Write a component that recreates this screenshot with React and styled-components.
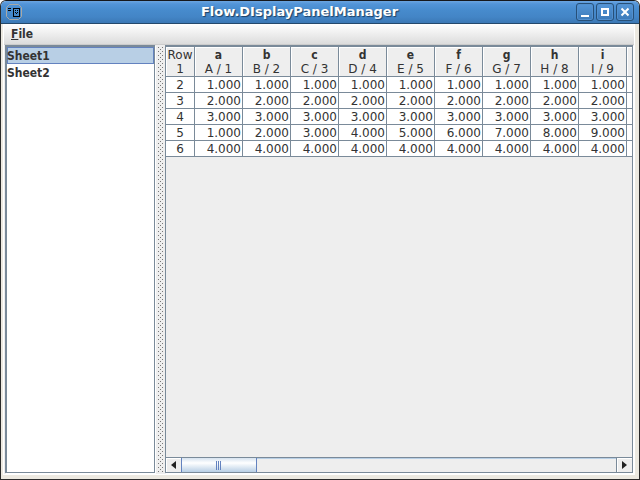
import React, { useState } from "react";
import styled, { createGlobalStyle } from "styled-components";

const line = "#7a8a99";

const Global = createGlobalStyle`
  * { box-sizing: border-box; }
  body { margin: 0; background: #fff; }
  button { font: inherit; padding: 0; }
  svg { flex: none; }
`;

const Frame = styled.main`
  display: flex;
  flex-direction: column;
  height: 100vh;
  overflow: hidden;
  border: 1px solid #2b2b2b;
  border-top-color: #16181c;
  border-radius: 6px 6px 0 0;
  background: #ece9e1;
  color: #333;
  font: 12px "DejaVu Sans", sans-serif;
`;

const TitleBar = styled.header`
  display: flex;
  flex: none;
  align-items: center;
  height: 23px;
  padding: 0 5px 0 4px;
  border-bottom: 1px solid #24486b;
  background: linear-gradient(#6ba5e0 0, #5294d8 3px, #478bcd 9px, #4385c6 16px, #3b78b5);
`;

const Title = styled.h1`
  flex: 1;
  margin: 0;
  color: #fff;
  font: bold 13px/22px "DejaVu Sans", sans-serif;
  text-align: center;
  text-shadow: 1px 1px 1px #1c3f63;
`;

const WindowButtons = styled.div`
  display: flex;
  gap: 2px;
`;

const WindowButton = styled.button`
  display: flex;
  width: 18px;
  height: 18px;
  border: 1px solid #275078;
  border-radius: 3px;
  background: linear-gradient(#5496d8, #3c7ab8);
  box-shadow: inset 0 0 0 1px #5290cf;
`;

const Content = styled.div`
  display: flex;
  flex: 1;
  flex-direction: column;
  min-height: 0;
  margin: 0 4px 4px 2px;
  padding-bottom: 1px;
  border: solid #fff;
  border-width: 0 1px 1px;
  background: #eee;
`;

const MenuBar = styled.nav`
  flex: none;
  height: 21px;
  padding-left: 7px;
  border-bottom: 1px solid #ccc;
  background: linear-gradient(#fff, #dcdcdc);
`;

const MenuButton = styled.button`
  border: 0;
  background: none;
  color: #333;
  font: bold 12px/20px "DejaVu Sans Condensed", "DejaVu Sans", sans-serif;
  font-stretch: condensed;
`;

const Split = styled.div`
  display: grid;
  flex: 1;
  grid-template-columns: 150px 10px minmax(0, 1fr);
  min-height: 0;
  margin: 0 1px;
`;

const SheetList = styled.div`
  border: 1px solid ${line};
  border-width: 2px 1px 1px 2px;
  background: #fff;
  box-shadow: 1px 1px #fff;
`;

const SheetButton = styled.button`
  display: block;
  width: 100%;
  height: 17px;
  border: 0;
  background: ${(p) => (p.$selected ? "#b8cfe5" : "transparent")};
  box-shadow: ${(p) => (p.$selected ? "inset 0 0 0 1px #6382bf" : "none")};
  color: #333;
  font: bold 12px/18px "DejaVu Sans Condensed", "DejaVu Sans", sans-serif;
  font-stretch: condensed;
  text-align: left;
`;

const Divider = styled.div`
  margin: 2px 2px 1px 3px;
  background:
    conic-gradient(from 270deg at 1px 1px, #777 90deg, transparent 0) 0 0 / 4px 4px,
    conic-gradient(from 270deg at 1px 1px, #777 90deg, transparent 0) 2px 2px / 4px 4px;
`;

const TablePanel = styled.section`
  display: flex;
  flex-direction: column;
  min-width: 0;
  border: solid ${line};
  border-width: 2px 1px 1px 1px;
  box-shadow: 1px 1px #fff;
`;

const TableView = styled.div`
  flex: 1;
  min-height: 0;
  overflow: hidden;
`;

const Table = styled.table`
  width: 100%;
  border-collapse: separate;
  border-spacing: 0;
  table-layout: fixed;
  background: #fff;
`;

const RowCol = styled.col`
  width: 29px;
`;

const DataCol = styled.col`
  width: 48px;
`;

const Heading = styled.th`
  height: 30px;
  padding: 1px 0 0;
  border: solid ${line};
  border-width: 0 1px 1px 0;
  background: #eee;
  box-shadow: inset 1px 1px #fff;
  font-weight: normal;
  line-height: 14px;
`;

const HeadingRest = styled.td`
  border-bottom: 1px solid ${line};
  background: #eee;
  box-shadow: inset 1px 1px #fff;
`;

const CellRest = styled.td`
  border-bottom: 1px solid ${line};
`;

const ColumnName = styled.b`
  display: block;
  font-family: "DejaVu Sans Condensed", "DejaVu Sans", sans-serif;
  font-stretch: condensed;
`;

const Cell = styled.td`
  height: 16px;
  padding: ${(p) => (p.$center ? "2px 0 0" : "2px 1px 0 0")};
  border: solid ${line};
  border-width: 0 1px 1px 0;
  line-height: 13px;
  text-align: ${(p) => (p.$center ? "center" : "right")};
`;

const ScrollBar = styled.div`
  display: flex;
  flex: none;
  height: 15px;
  border-top: 1px solid ${line};
  background: #eee;
`;

const Arrow = styled.button`
  display: flex;
  align-items: center;
  justify-content: center;
  width: 15px;
  border: 0;
  background: #eee;
  box-shadow: inset 1px 1px #fff;
`;

const Track = styled.div`
  flex: 1;
  border-right: 1px solid ${line};
  box-shadow: inset 0 1px #b8cfe5;
`;

const Thumb = styled.div`
  display: flex;
  align-items: center;
  justify-content: center;
  width: 76px;
  height: 100%;
  border: solid #6382bf;
  border-width: 0 1px;
  background: linear-gradient(#d6e3f0 0, #fff 5px, #b8cfe5);
`;

const columns = ["a", "b", "c", "d", "e", "f", "g", "h", "i"];
const rows = [
  [2, () => 1],
  [3, () => 2],
  [4, () => 3],
  [5, (i) => i + 1],
  [6, () => 4],
];

function AppIcon() {
  return (
    <svg width="18" height="18" viewBox="0 0 18 18" fill="none">
      <path d="M4.500 1.500h9l3 3v9l-3 3h-9l-3-3v-9z" stroke="#a9a9a5" />
      <g shapeRendering="crispEdges">
        <path d="M3 5.500h3M3 7.500h3" stroke="#000" />
        <path d="M8.500 5.500h6v8h-6z" stroke="#000" />
        <path d="M10 7h1v1h-1zM12 7h1v1h-1zM10 9h1v1h-1zM12 9h1v1h-1zM11 10h1v1h-1z" fill="#000" />
      </g>
    </svg>
  );
}

function Glyph({ path }) {
  return (
    <svg width="16" height="16" viewBox="0 0 16 16" fill="none" stroke="#fff" strokeWidth="2">
      <path d={path} />
    </svg>
  );
}

export default function App() {
  const [sheet, setSheet] = useState("Sheet1");
  return (
    <>
      <Global />
      <Frame>
        <TitleBar>
          <AppIcon />
          <Title>Flow.DIsplayPanelManager</Title>
          <WindowButtons>
            <WindowButton aria-label="Minimize"><Glyph path="M4 12h8" /></WindowButton>
            <WindowButton aria-label="Maximize"><Glyph path="M5 5h6v6H5z" /></WindowButton>
            <WindowButton aria-label="Close"><Glyph path="M4.500 4.500l7 7M11.500 4.500l-7 7" /></WindowButton>
          </WindowButtons>
        </TitleBar>
        <Content>
          <MenuBar>
            <MenuButton><u>F</u>ile</MenuButton>
          </MenuBar>
          <Split>
            <SheetList>
              {["Sheet1", "Sheet2"].map((name) => (
                <SheetButton key={name} $selected={name === sheet} onClick={() => setSheet(name)}>
                  {name}
                </SheetButton>
              ))}
            </SheetList>
            <Divider />
            <TablePanel>
              <TableView>
                <Table>
                  <colgroup>
                    <RowCol />
                    {columns.map((c) => <DataCol key={c} />)}
                    <col />
                  </colgroup>
                  <thead>
                    <tr>
                      <Heading>Row<br />1</Heading>
                      {columns.map((c, i) => (
                        <Heading key={c}>
                          <ColumnName>{c}</ColumnName>
                          {`${c.toUpperCase()} / ${i + 1}`}
                        </Heading>
                      ))}
                      <HeadingRest />
                    </tr>
                  </thead>
                  <tbody>
                    {rows.map(([n, value]) => (
                      <tr key={n}>
                        <Cell $center>{n}</Cell>
                        {columns.map((c, i) => <Cell key={c}>{value(i).toFixed(3)}</Cell>)}
                        <CellRest />
                      </tr>
                    ))}
                  </tbody>
                </Table>
              </TableView>
              <ScrollBar>
                <Arrow aria-label="Scroll left">
                  <svg width="5" height="8" viewBox="0 0 5 8" fill="#222"><path d="M5 0v8L0 4z" /></svg>
                </Arrow>
                <Track>
                  <Thumb>
                    <svg width="6" height="9" viewBox="0 0 6 9" shapeRendering="crispEdges">
                      <path d="M.5 0v9M2.500 0v9M4.500 0v9" stroke="#6382bf" />
                    </svg>
                  </Thumb>
                </Track>
                <Arrow aria-label="Scroll right">
                  <svg width="5" height="8" viewBox="0 0 5 8" fill="#222"><path d="M0 0v8l5-4z" /></svg>
                </Arrow>
              </ScrollBar>
            </TablePanel>
          </Split>
        </Content>
      </Frame>
    </>
  );
}
